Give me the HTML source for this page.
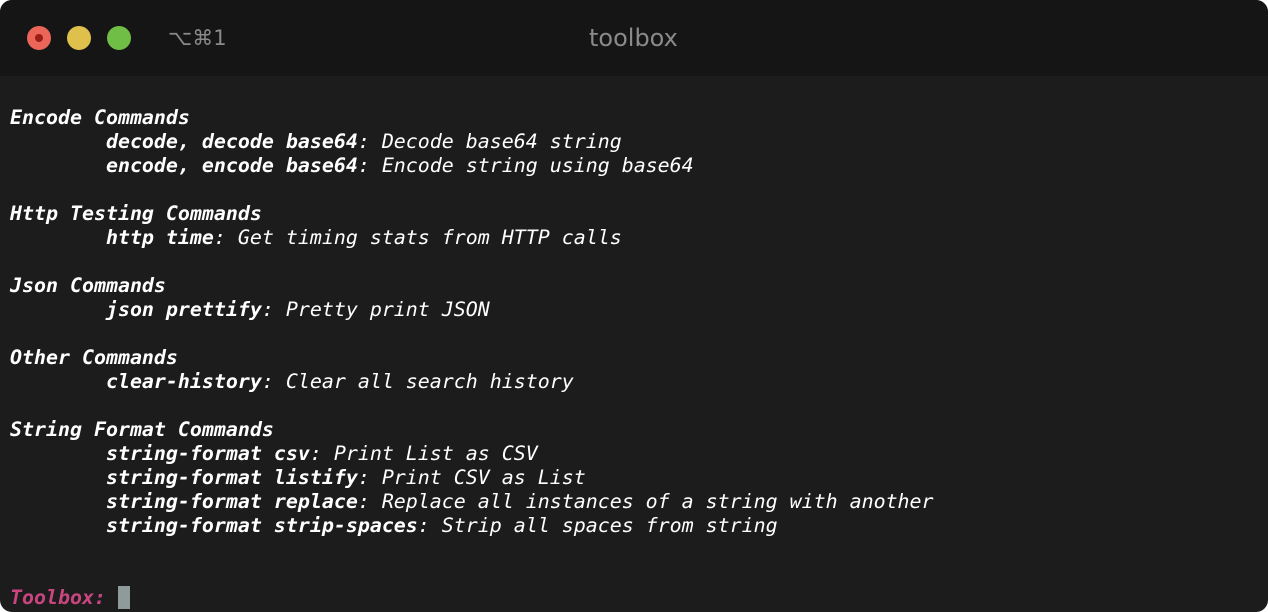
<!DOCTYPE html>
<html><head><style>
html,body{margin:0;padding:0;background:#fff;}
.win{position:relative;width:1268px;height:612px;background:#1c1c1c;border-radius:12px;overflow:hidden;}
.bar{position:absolute;left:0;top:0;width:1268px;height:76px;background:#151515;}
.dot{position:absolute;top:26px;width:24px;height:24px;border-radius:50%;}
.t{position:absolute;top:24px;font-family:"DejaVu Sans","Liberation Sans",sans-serif;font-size:24px;color:#8a8a8a;}
pre{position:absolute;left:10px;top:106px;margin:0;font-family:"DejaVu Sans Mono","Liberation Mono",monospace;font-size:19.93px;line-height:24px;color:#fff;font-style:italic;}
b{font-weight:bold;}
.p{color:#c8457f;font-weight:bold;}
.cur{display:inline-block;width:12px;height:23px;background:#8f9a9a;vertical-align:-5px;}
</style></head><body><div class="win">
<div class="bar">
<div class="dot" style="left:27px;background:#ec6559"><div style="position:absolute;left:8px;top:8px;width:8px;height:8px;border-radius:50%;background:#9a1e15"></div></div>
<div class="dot" style="left:67px;background:#e0c04c"></div>
<div class="dot" style="left:107px;background:#70be46"></div>
<div class="t" style="left:168px;font-size:21px;top:26px">⌥⌘1</div>
<div class="t" style="left:589px">toolbox</div>
</div>
<pre><b>Encode Commands</b>
        <b>decode, decode base64</b>: Decode base64 string
        <b>encode, encode base64</b>: Encode string using base64

<b>Http Testing Commands</b>
        <b>http time</b>: Get timing stats from HTTP calls

<b>Json Commands</b>
        <b>json prettify</b>: Pretty print JSON

<b>Other Commands</b>
        <b>clear-history</b>: Clear all search history

<b>String Format Commands</b>
        <b>string-format csv</b>: Print List as CSV
        <b>string-format listify</b>: Print CSV as List
        <b>string-format replace</b>: Replace all instances of a string with another
        <b>string-format strip-spaces</b>: Strip all spaces from string


<span class="p">Toolbox:</span> <span class="cur"></span></pre>
</div></body></html>
